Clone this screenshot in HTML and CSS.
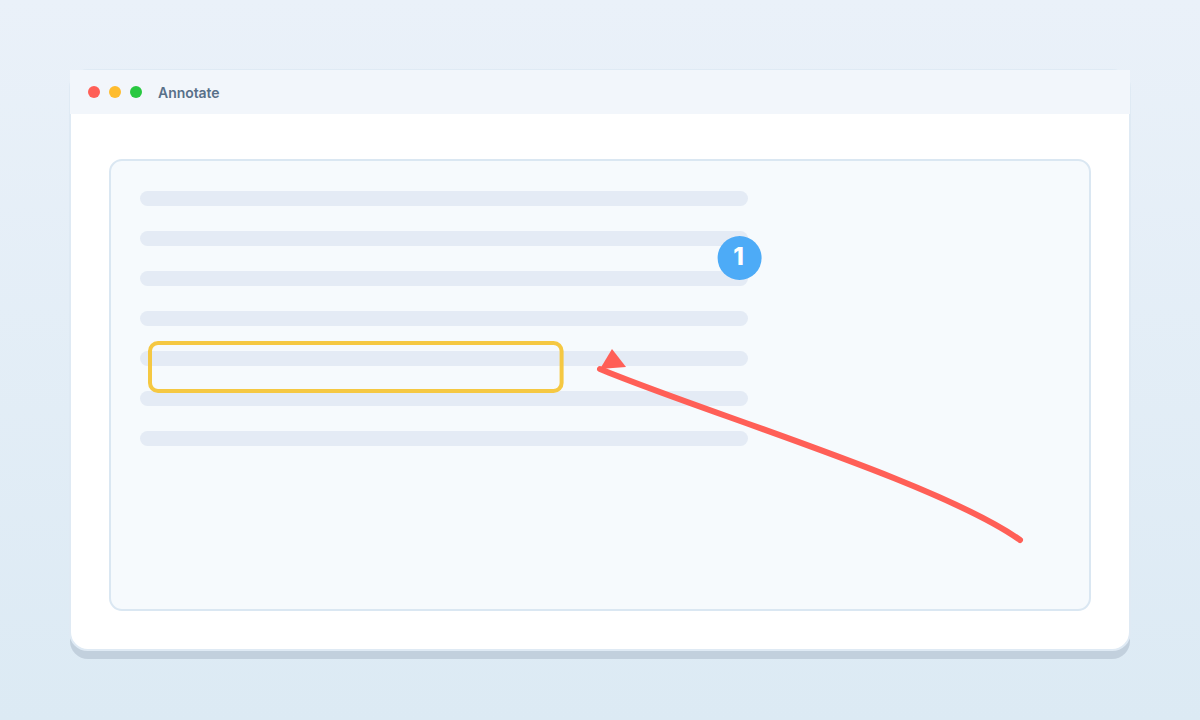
FILE: index.html
```html
<!DOCTYPE html>
<html lang="en">
<head>
  <meta charset="UTF-8">
  <meta name="viewport" content="width=device-width, initial-scale=1">
  <title>Annotate</title>
  <link rel="stylesheet" href="styles.css">
</head>
<body>
  <main class="window">
    <header class="titlebar">
      <span class="dot red"></span>
      <span class="dot yellow"></span>
      <span class="dot green"></span>
      <h1>Annotate</h1>
    </header>
    <section class="canvas">
      <div class="line"></div>
      <div class="line"></div>
      <div class="line"></div>
      <div class="line"></div>
      <div class="line"></div>
      <div class="line"></div>
      <div class="line"></div>

      <!-- Annotations over the document -->
      <svg class="annotations" viewBox="110 160 980 450">
        <rect x="150" y="343" width="411.6" height="48" rx="8" fill="none" stroke="#f5c842" stroke-width="4"/>
        <path d="M1020 540 C940 483 700 411 600 369" fill="none" stroke="#ff5f57" stroke-width="6" stroke-linecap="round"/>
        <path d="M600 369 L612 349 L626 367 Z" fill="#ff5f57"/>
      </svg>
      <svg class="badge" viewBox="0 0 44 44">
        <circle cx="21.6" cy="22" r="22" fill="#4dabf7"/>
        <text x="20.6" y="29" text-anchor="middle">1</text>
      </svg>
    </section>
  </main>
</body>
</html>
```

FILE: styles.css
```css
/* Reset */
* { margin: 0; padding: 0; box-sizing: border-box; }
body {
  height: 720px;
  padding: 69px;
  font-family: Inter, sans-serif;
  background: linear-gradient(#eaf1f9, #dceaf4);
  overflow: hidden;
}
.window {
  height: 582px;
  background: #fff;
  border: 2px solid #dfeaf4;
  border-radius: 19px;
  box-shadow: 0 9px 0 -1px #c2d0dd;
}
.titlebar {
  display: flex;
  align-items: center;
  gap: 9px;
  height: 44px;
  margin: -1px -1px 0;
  padding-left: 18px;
  background: #f2f6fb;
}
.titlebar h1 {
  margin: 0 0 0 7px;
  font-size: 14px;
  font-weight: 600;
  letter-spacing: -0.05px;
  color: #587089;
}
.dot {
  width: 12px;
  height: 12px;
  border-radius: 50%;
}
.red { background: #ff5f57; }
.yellow { background: #febc2e; }
.green { background: #28c840; }
.canvas {
  position: relative;
  display: flex;
  flex-direction: column;
  gap: 25px;
  height: 452px;
  margin: 45px 38px 0;
  padding: 30px 29px;
  background: #f6fafd;
  border: 2px solid #dae7f2;
  border-radius: 13px;
}
.line {
  width: 608px;
  height: 15px;
  border-radius: 7.5px;
  background: #e4ebf5;
}
.annotations {
  position: absolute;
  left: -1px;
  top: -1px;
  width: 980px;
  height: 450px;
}
.badge {
  position: absolute;
  left: 607px;
  top: 75px;
  width: 44px;
  height: 44px;
  overflow: visible;
}
.badge text {
  fill: #fff;
  font-size: 24px;
  font-weight: 800;
}
```
